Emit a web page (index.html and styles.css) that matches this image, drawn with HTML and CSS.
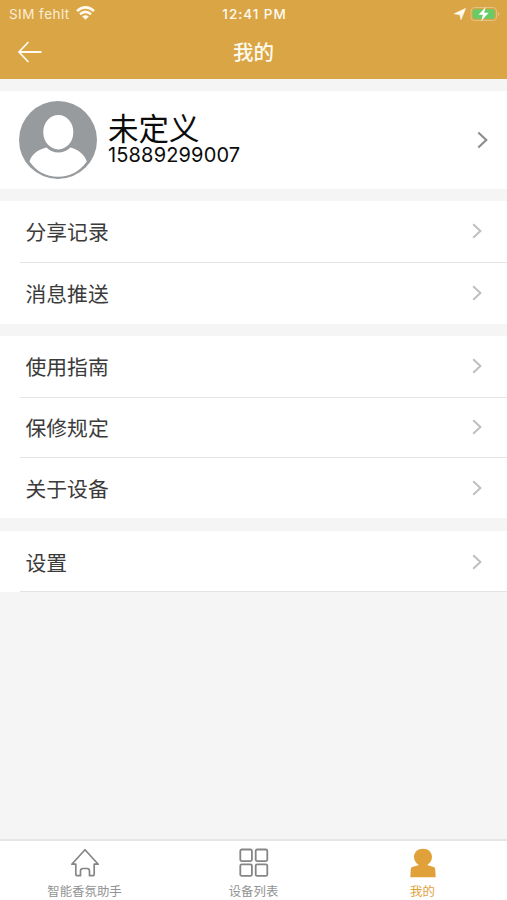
FILE: index.html
```html
<!DOCTYPE html>
<html lang="zh-CN">
<head>
<meta charset="utf-8">
<meta name="viewport" content="width=device-width, initial-scale=1">
<title>我的</title>
<link rel="stylesheet" href="styles.css">
</head>
<body>
<svg width="0" height="0" class="defs"><symbol id="chevron" viewBox="0 0 10 16"><path d="M1.2 1.2 8.4 8l-7.2 6.8" fill="none" stroke="currentColor" stroke-width="2"/></symbol></svg>
<div class="app">
  <header class="header">
    <div class="status">
      <div class="carrier"><span class="carrier-name">SIM fehlt</span>
        <svg class="wifi" width="19" height="14" viewBox="0 0 19 14"><g fill="none" stroke="currentColor" stroke-width="2.6"><path d="M1 5.1Q9.5-2.4 18 5.1"/><path d="M4 8.3Q9.5 3.5 15 8.3"/></g><path d="M6.2 10.5Q9.5 8 12.8 10.5L9.5 13.8Z" fill="currentColor"/></svg>
      </div>
      <time class="clock">12:41 PM</time>
      <div class="power">
        <svg width="12" height="12" viewBox="0 0 12 12"><path d="M11.5.5 7 11.5 5.8 6.6.3 5.8Z" fill="currentColor" stroke="currentColor" stroke-width=".7" stroke-linejoin="round"/></svg>
        <svg width="30" height="16" viewBox="0 0 30 16"><rect x="1" y="1.5" width="25.5" height="13" rx="3.5" fill="none" stroke="#e5c184"/><rect x="2.7" y="3.2" width="22" height="9.6" rx="2" fill="#67cb66"/><path d="M28 6v4q1.5-.6 1.5-2T28 6" fill="#e5c184"/><path d="M15.7 1 8.5 8.8h4.4L11.3 15l7.4-8.2h-4.5Z" fill="#fff"/></svg>
      </div>
    </div>
    <nav class="titlebar">
      <svg class="back" width="24" height="22" viewBox="0 0 24 22"><path d="M10.4 1 1 11l9.4 10M1 11h22.5" fill="none" stroke="currentColor" stroke-width="1.8"/></svg>
      <h1 class="title">我的</h1>
    </nav>
  </header>
  <main class="content">
    <section class="profile">
      <svg class="avatar" width="78" height="78" viewBox="0 0 78 78"><circle cx="39" cy="39" r="39" fill="#989b9d"/><ellipse cx="39.3" cy="31.2" rx="15" ry="17.2" fill="#fff"/><path d="M10.5 60.5C13 53 18 49 27.5 46.5Q32.5 51.5 39.3 51.5T51.5 46.5C60 49 65 53 67.8 60.5Q57 75.7 39 75.7T10.5 60.5Z" fill="#fff"/></svg>
      <div class="identity"><div class="name">未定义</div><div class="phone">15889299007</div></div>
      <svg class="chevron chevron-dark"><use href="#chevron"/></svg>
    </section>
    <section class="group">
      <div class="row"><span>分享记录</span><svg class="chevron"><use href="#chevron"/></svg></div>
      <div class="row"><span>消息推送</span><svg class="chevron"><use href="#chevron"/></svg></div>
    </section>
    <section class="group">
      <div class="row"><span>使用指南</span><svg class="chevron"><use href="#chevron"/></svg></div>
      <div class="row"><span>保修规定</span><svg class="chevron"><use href="#chevron"/></svg></div>
      <div class="row"><span>关于设备</span><svg class="chevron"><use href="#chevron"/></svg></div>
    </section>
    <section class="group settings">
      <div class="row"><span>设置</span><svg class="chevron"><use href="#chevron"/></svg></div>
    </section>
  </main>
  <footer class="tabs">
    <div class="tab"><svg width="30" height="30" viewBox="0 0 30 30"><path d="M15 1.7 1.8 16.2h4V26q0 1.7 1.7 1.7h3V23q0-2.5 2.5-2.5h4Q19.5 20.5 19.5 23v4.7h3q1.7 0 1.7-1.7v-9.8h4Z" fill="none" stroke="currentColor" stroke-width="1.7" stroke-linejoin="round"/></svg><span>智能香氛助手</span></div>
    <div class="tab"><svg width="30" height="30" viewBox="0 0 30 30"><g fill="none" stroke="currentColor" stroke-width="1.8"><rect x="1.3" y="1.5" width="11.6" height="11.6" rx="1.5"/><rect x="16.7" y="1.5" width="11.6" height="11.6" rx="1.5"/><rect x="1.3" y="16.3" width="11.6" height="11.6" rx="1.5"/><rect x="16.7" y="16.3" width="11.6" height="11.6" rx="1.5"/></g></svg><span>设备列表</span></div>
    <div class="tab active"><svg width="30" height="30" viewBox="0 0 30 30"><path d="M15 .8C9.8.8 6 4.2 6 9c0 3.6 2 6.2 4.3 7.5v.7L4.2 19Q3 19.5 2.8 21L2.3 29.3H27.7L27.2 21Q27 19.5 25.8 19l-6.1-1.8v-.7C22 15.2 24 12.6 24 9 24 4.2 20.2.8 15 .8Z" fill="currentColor"/></svg><span>我的</span></div>
  </footer>
</div>
</body>
</html>
```
FILE: styles.css
```css
* { box-sizing: border-box; }
body { margin: 0; font-family: Inter, "Noto Sans CJK SC", sans-serif; background: #f5f5f5; }
.defs { display: none; }
svg { display: block; flex: none; }
.app { height: 900px; display: flex; flex-direction: column; overflow: hidden; }
.header { height: 79px; background: #daa544; color: #fffaf0; }
.status { height: 27px; padding: 0 7px 0 9px; display: grid; grid-template-columns: 1fr auto 1fr; align-items: center; font-size: 13.5px; line-height: 27px; }
.carrier { display: flex; align-items: center; gap: 6px; padding-top: 1px; }
.carrier-name { letter-spacing: .45px; color: #fbeed8; }
.wifi { margin-top: -3px; }
.clock { font-weight: 500; font-size: 13.5px; letter-spacing: .95px; padding-top: 1px; }
.power { display: flex; justify-content: flex-end; align-items: center; gap: 4px; }
.titlebar { height: 49px; display: grid; grid-template-columns: 1fr auto 1fr; align-items: center; padding: 0 18px; }
.title { margin: 0; padding-top: 2px; font-size: 20.5px; line-height: 30px; font-weight: 500; grid-column: 2; }
.content { flex: 1; padding-top: 12px; }
.profile { height: 98px; padding: 0 19px; background: #fff; display: flex; align-items: center; }
.identity { margin-left: 11px; flex: 1; padding-bottom: 3px; color: #0c0c0c; }
.name { font-size: 30.5px; line-height: 31px; padding-bottom: 1px; }
.phone { font-size: 20px; line-height: 20px; letter-spacing: .15px; }
.group { margin-top: 12px; background: #fff; }
.row { height: 61px; margin-left: 20px; padding: 0 25px 1px 5.5px; display: flex; align-items: center; justify-content: space-between; font-size: 20.8px; color: #3b3b3b; }
.row + .row { border-top: 1px solid #e5e5e5; }
.group:not(.settings) .row:last-child { height: 62px; padding-bottom: 2px; }
.group:nth-of-type(3) .row:first-child { height: 61px; }
.group:nth-of-type(3) .row:last-child { height: 61px; padding-bottom: 0; }
.group:nth-of-type(3) .row:nth-child(2) { height: 60px; }
.settings { margin-top: 13px; }
.settings .row { border-bottom: 1px solid #e2e2e2; padding: 1px 25px 0 5.5px; }
.chevron { width: 10px; height: 16px; color: #bfbfbf; }
.chevron-dark { width: 11px; height: 18px; color: #8e8e8e; }
.tabs { height: 61px; border-top: 2px solid #e5e5e5; background: #fff; display: grid; grid-template-columns: repeat(3, 1fr); }
.tab { display: flex; flex-direction: column; align-items: center; padding-top: 7px; color: #858585; font-size: 12.4px; line-height: 18px; gap: 5px; }
.tab span { color: #929292; }
.tab.active, .tab.active span { color: #e0a13b; }
```
